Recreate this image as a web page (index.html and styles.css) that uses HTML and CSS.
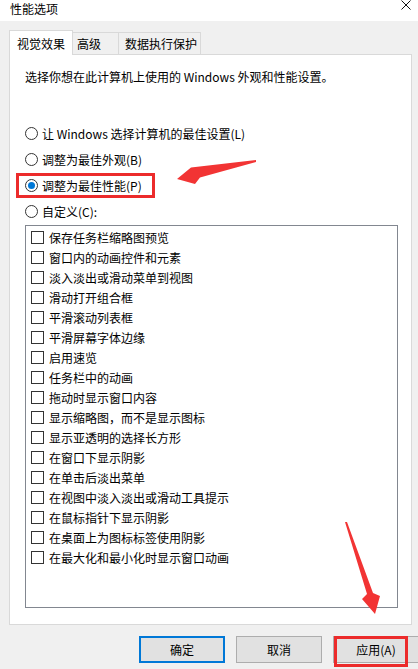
FILE: index.html
```html
<!DOCTYPE html>
<html>
<head>
    <meta charset="UTF-8">
    <title>性能选项</title>
    <link rel="stylesheet" href="styles.css">
</head>
<body>
<div class="window">
    <div class="titlebar">
        <span class="title">性能选项</span>
        <svg class="close" width="10" height="10" viewBox="0 0 10 10">
            <path d="M0.5 0.5L9.5 9.5M9.5 0.5L0.5 9.5" stroke="#111" stroke-width="1"/>
        </svg>
    </div>
    <div class="main">
        <ul class="tabs">
            <li class="tab active">视觉效果</li>
            <li class="tab tab-adv">高级</li>
            <li class="tab tab-dep">数据执行保护</li>
        </ul>
        <div class="panel">
            <p class="desc">选择你想在此计算机上使用的 Windows 外观和性能设置。</p>
            <div class="options">
                <div class="radio"><span class="ring"></span>让 Windows 选择计算机的最佳设置(L)</div>
                <div class="radio"><span class="ring"></span>调整为最佳外观(B)</div>
                <div class="radio"><span class="ring checked"></span>调整为最佳性能(P)</div>
                <div class="radio"><span class="ring"></span>自定义(C):</div>
            </div>
            <ul class="list">
                <li><span class="box"></span>保存任务栏缩略图预览</li>
                <li><span class="box"></span>窗口内的动画控件和元素</li>
                <li><span class="box"></span>淡入淡出或滑动菜单到视图</li>
                <li><span class="box"></span>滑动打开组合框</li>
                <li><span class="box"></span>平滑滚动列表框</li>
                <li><span class="box"></span>平滑屏幕字体边缘</li>
                <li><span class="box"></span>启用速览</li>
                <li><span class="box"></span>任务栏中的动画</li>
                <li><span class="box"></span>拖动时显示窗口内容</li>
                <li><span class="box"></span>显示缩略图，而不是显示图标</li>
                <li><span class="box"></span>显示亚透明的选择长方形</li>
                <li><span class="box"></span>在窗口下显示阴影</li>
                <li><span class="box"></span>在单击后淡出菜单</li>
                <li><span class="box"></span>在视图中淡入淡出或滑动工具提示</li>
                <li><span class="box"></span>在鼠标指针下显示阴影</li>
                <li><span class="box"></span>在桌面上为图标标签使用阴影</li>
                <li><span class="box"></span>在最大化和最小化时显示窗口动画</li>
            </ul>
        </div>
        <div class="buttons">
            <button class="btn default">确定</button>
            <button class="btn">取消</button>
            <button class="btn">应用(A)</button>
        </div>
    </div>

    <!-- annotations drawn over the dialog -->
    <div class="mark mark-radio"></div>
    <div class="mark mark-apply"></div>
    <svg class="arrows" width="418" height="669" viewBox="0 0 418 669">
        <polygon points="256,160 191,167.5 177,179 195,184 200,177.5 256,162" fill="#f23434"/>
        <polygon points="345,522 367,594 362,599 375,614 380,596 373,593 347,522" fill="#f23434"/>
    </svg>
</div>
</body>
</html>
```

FILE: styles.css
```css
body {
    margin: 0;
    font-family: "Noto Sans CJK SC", "Noto Sans", sans-serif;
    font-size: 12px;
    color: #000;
}

ul, li, p {
    margin: 0;
    padding: 0;
    list-style: none;
}

.window {
    position: relative;
    width: 418px;
    height: 669px;
    overflow: hidden;
    background: #f0f0f0;
}

.titlebar {
    height: 21px;
    padding: 0 7px 0 10px;
    display: flex;
    justify-content: space-between;
    align-items: flex-start;
    background: #fff;
}

.title {
    line-height: 17px;
}

.tabs {
    display: flex;
    align-items: flex-end;
    margin-top: 9px;
    padding-left: 9px;
}

.tab {
    box-sizing: border-box;
    height: 22px;
    display: flex;
    align-items: center;
    border: 1px solid #d9d9d9;
    border-bottom: none;
    border-left: none;
    background: #f0f0f0;
}

.tab.active {
    position: relative;
    z-index: 1;
    width: 64px;
    height: 25px;
    margin-bottom: -1px;
    justify-content: center;
    border-left: 1px solid #d9d9d9;
    background: #fff;
}

.tab-adv {
    width: 46px;
    padding-left: 4px;
}

.tab-dep {
    width: 82px;
    padding-left: 6px;
}

.panel {
    box-sizing: border-box;
    height: 571px;
    margin: 0 6px 0 9px;
    padding: 0 13px 0 15px;
    border: 1px solid #d9d9d9;
    background: #fff;
}

.desc {
    margin-top: 12px;
    line-height: 20px;
}

.options {
    display: flex;
    flex-direction: column;
    gap: 6px;
    margin-top: 36px;
}

.radio {
    display: flex;
    align-items: center;
    gap: 4px;
    height: 20px;
}

.ring {
    box-sizing: border-box;
    width: 13px;
    height: 13px;
    border: 1px solid #333;
    border-radius: 50%;
    display: flex;
    align-items: center;
    justify-content: center;
}

.ring.checked::after {
    content: "";
    width: 7px;
    height: 7px;
    border-radius: 50%;
    background: #0078d7;
}

.list {
    box-sizing: border-box;
    height: 383px;
    margin-top: 4px;
    padding: 1px 0 0 5px;
    border: 1px solid #828790;
}

.list li {
    height: 20px;
    display: flex;
    align-items: center;
}

.box {
    box-sizing: border-box;
    width: 13px;
    height: 13px;
    margin-right: 5px;
    border: 1px solid #333;
    background: #fff;
}

.buttons {
    display: flex;
    gap: 11px;
    margin-top: 11px;
    padding-left: 139px;
}

.btn {
    box-sizing: border-box;
    flex: none;
    width: 86px;
    height: 27px;
    padding: 0;
    border: 1px solid #adadad;
    background: #e1e1e1;
    font-family: inherit;
    font-size: 12px;
    color: #000;
}

.btn.default {
    border: 2px solid #0078d7;
}

.mark {
    position: absolute;
    box-sizing: border-box;
    border: 3px solid #ec2b2b;
}

.mark-radio {
    left: 16px;
    top: 173px;
    width: 139px;
    height: 25px;
}

.mark-apply {
    left: 334px;
    top: 636px;
    width: 74px;
    height: 31px;
}

.arrows {
    position: absolute;
    left: 0;
    top: 0;
    pointer-events: none;
}
```
